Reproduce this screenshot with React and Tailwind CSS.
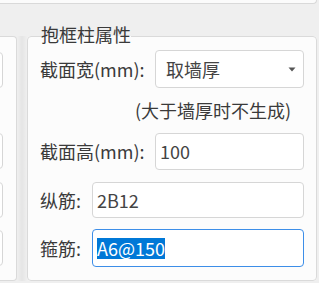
const font = { fontFamily: '"Noto Sans CJK SC", "Noto Sans", sans-serif' };

function Field({ children, className = "", focused = false }) {
  return (
    <div
      className={
        "flex items-center h-full bg-white rounded-[4px] pl-[4px] text-[18px] text-[#444444] " +
        (focused ? "border-[1.5px] border-[#3d8ee8]" : "border border-[#d6d6d6]") +
        " " +
        className
      }
    >
      {children}
    </div>
  );
}

export default function App() {
  return (
    <div
      className="w-[319px] h-[283px] overflow-hidden bg-[#efefef] text-[#3a3a3a]"
      style={font}
    >
      {/* panel above */}
      <div className="w-[317px] h-[4px] bg-[#fbfbfb] border-b border-r border-[#d9d9d9] rounded-br-[4px]"></div>

      <div className="flex items-start mt-[20px]">
        {/* left panel, mostly cut off */}
        <div className="mt-[12px] w-[17px] h-[245px] bg-[#fcfcfc] border border-l-0 border-[#dadada] rounded-r-[4px] overflow-hidden">
          <div className="flex flex-col -ml-[20px] w-[23px]">
            <div className="mt-[15px] h-[36px] bg-white border border-[#d6d6d6] rounded-[4px]"></div>
            <div className="mt-[45px] h-[36px] bg-white border border-[#d6d6d6] rounded-[4px]"></div>
            <div className="mt-[13px] h-[36px] bg-white border border-[#d6d6d6] rounded-[4px]"></div>
            <div className="mt-[12px] h-[36px] bg-white border border-[#d6d6d6] rounded-[4px]"></div>
          </div>
        </div>

        {/* splitter */}
        <div className="mt-[12px] w-[10px] h-[245px] bg-gradient-to-r from-[#efefef] via-[#e5e5e5] to-[#efefef]"></div>

        {/* group box */}
        <fieldset className="w-[290px] h-[257px] bg-[#fcfcfc] border border-[#dadada] rounded-[4px] px-[12px] pb-[13px]">
          <legend className="ml-[1px] pb-[5px] text-[18px] leading-[20px] text-[#3a3a3a]">
            抱框柱属性
          </legend>

          <div className="flex items-center h-[38px] mt-[1px]">
            <span className="text-[18px] whitespace-nowrap">截面宽(mm):</span>
            <div className="ml-auto w-[149px] h-full">
              <Field className="pl-[10px] pr-[7px] justify-between">
                <span>取墙厚</span>
                <svg width="8" height="5" viewBox="0 0 8 5">
                  <path d="M0.5 0.5 L7.5 0.5 L4 4.5 Z" fill="#555555" />
                </svg>
              </Field>
            </div>
          </div>

          <div className="flex items-center h-[45px]">
            <span className="ml-[95px] text-[18px] whitespace-nowrap">(大于墙厚时不生成)</span>
          </div>

          <div className="flex items-center h-[37px]">
            <span className="text-[18px] whitespace-nowrap">截面高(mm):</span>
            <div className="ml-auto w-[149px] h-full">
              <Field>100</Field>
            </div>
          </div>

          <div className="flex items-center h-[36px] mt-[12px]">
            <span className="text-[18px] whitespace-nowrap">纵筋:</span>
            <div className="ml-auto w-[212px] h-full">
              <Field>2B12</Field>
            </div>
          </div>

          <div className="flex items-center h-[38px] mt-[11px]">
            <span className="text-[18px] whitespace-nowrap">箍筋:</span>
            <div className="ml-auto w-[212px] h-full">
              <Field focused className="pl-[2px]">
                <span className="inline-block leading-[21px] bg-[#0078d7] text-white">A6@150</span>
              </Field>
            </div>
          </div>
        </fieldset>
      </div>
    </div>
  );
}
